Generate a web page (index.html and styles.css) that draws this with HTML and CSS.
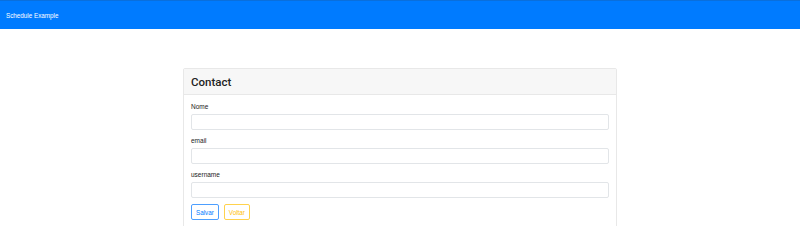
FILE: index.html
```html
<!DOCTYPE html>
<html lang="en">
<head>
    <meta charset="UTF-8">
    <meta name="viewport" content="width=device-width, initial-scale=1.0">
    <title>Schedule Example</title>
    <link rel="stylesheet" href="styles.css">
</head>
<body>
    <nav class="navbar">
        <span class="navbar-brand">Schedule Example</span>
    </nav>

    <div class="container">
        <div class="card">
            <div class="card-header">
                <h3 class="card-title">Contact</h3>
            </div>
            <div class="card-body">
                <div class="form-group">
                    <label for="nome">Nome</label>
                    <input class="form-control" type="text" id="nome">
                </div>
                <div class="form-group">
                    <label for="email">email</label>
                    <input class="form-control" type="text" id="email">
                </div>
                <div class="form-group">
                    <label for="username">username</label>
                    <input class="form-control" type="text" id="username">
                </div>
                <div class="actions">
                    <button class="btn btn-outline-primary">Salvar</button>
                    <button class="btn btn-outline-warning">Voltar</button>
                </div>
            </div>
        </div>
    </div>
</body>
</html>
```

FILE: styles.css
```css
body {
    margin: 0;
    font-family: "Liberation Sans", Arial, sans-serif;
    color: #212529;
    background: #fff;
}
.navbar {
    background: #007bff;
    border-top: 1px solid #0a6fdc;
    height: 28px;
    display: flex;
    align-items: center;
    padding: 0 6px;
}
.navbar-brand {
    color: #fff;
    font-size: 6.3px;
}
.container {
    width: 434px;
    margin: 39px auto 0;
}
.card {
    border: 1px solid #e8e8e8;
    border-radius: 2px;
}
.card-header {
    background: #f7f7f7;
    border-bottom: 1px solid #e8e8e8;
    height: 25px;
    display: flex;
    align-items: center;
    padding: 0 7px;
}
.card-title {
    margin: 0;
    font-family: Roboto, "Liberation Sans", sans-serif;
    font-size: 11.5px;
    font-weight: 500;
    color: #222;
}
.card-body {
    padding: 7px 7px 8px;
}
.form-group {
    margin-bottom: 6px;
}
.form-group label {
    display: block;
    font-size: 6.5px;
    line-height: 9px;
    margin-bottom: 3px;
    color: #222;
}
.form-control {
    display: block;
    box-sizing: border-box;
    width: 100%;
    height: 16px;
    margin: 0;
    border: 1px solid #e2e5e8;
    border-radius: 2px;
    background: #fff;
}
.actions {
    display: flex;
    gap: 5px;
}
.btn {
    font-family: inherit;
    font-size: 6.3px;
    height: 16px;
    padding: 0 4px;
    background: #fff;
    border-radius: 2px;
    cursor: pointer;
}
.btn-outline-primary {
    color: #007bff;
    border: 1px solid #4d9fff;
}
.btn-outline-warning {
    color: #ffc107;
    border: 1px solid #ffd24d;
}
```
